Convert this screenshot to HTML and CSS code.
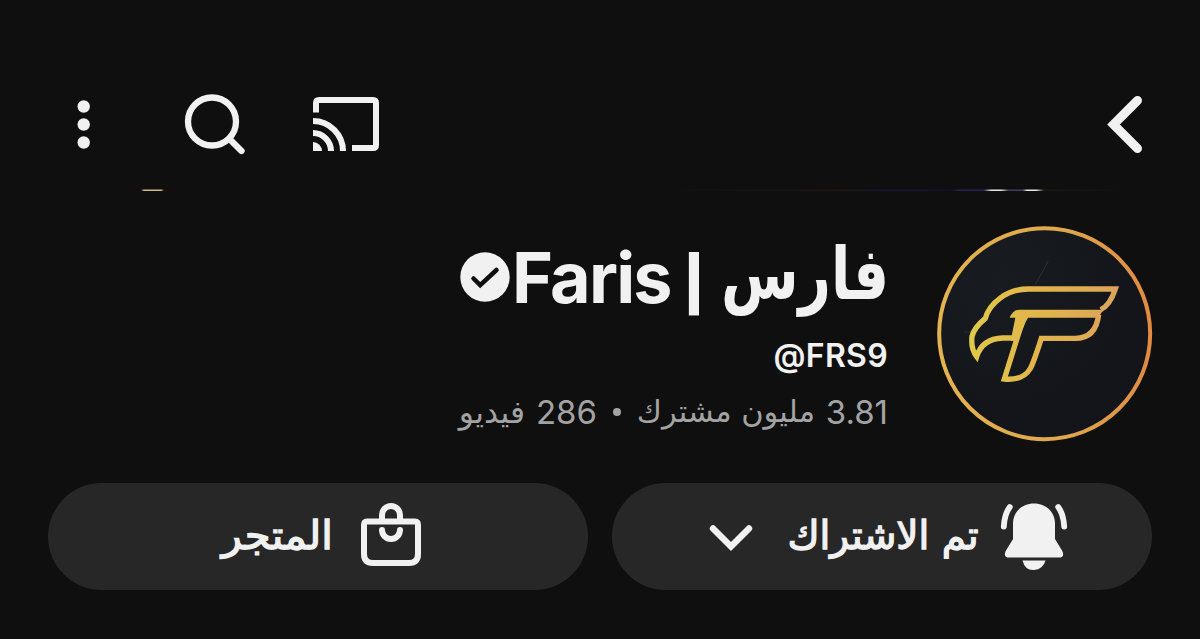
FILE: index.html
```html
<!DOCTYPE html>
<html lang="ar" dir="rtl">
<head>
<meta charset="utf-8">
<title>Faris</title>
<link rel="stylesheet" href="styles.css">
</head>
<body>
<header class="topbar">
  <svg class="back" viewBox="0 0 36 60"><path d="M31.500 6.500 7.500 30.500l24 24" fill="none" stroke="#f1f1f1" stroke-width="9" stroke-linecap="round"/></svg>
  <div class="tools">
    <svg class="cast" viewBox="0 0 66 54"><path d="M3 15.500V6q0-3 3-3h54q3 0 3 3v42q0 3-3 3H39" fill="none" stroke="#f1f1f1" stroke-width="6"/><path d="M0 45a9 9 0 0 1 9 9H0z" fill="#f1f1f1"/><path d="M0 36a18 18 0 0 1 18 18M0 24a30 30 0 0 1 30 30" fill="none" stroke="#f1f1f1" stroke-width="6"/></svg>
    <svg class="search" viewBox="0 0 60 60"><circle cx="27" cy="27.500" r="24" fill="none" stroke="#f1f1f1" stroke-width="6.300"/><path d="M45 45.500l11.500 11.500" stroke="#f1f1f1" stroke-width="6.300" stroke-linecap="round"/></svg>
    <svg class="more" viewBox="0 0 12 48"><g fill="#f1f1f1"><circle cx="5.700" cy="6.500" r="6.200"/><circle cx="5.700" cy="24.500" r="6.200"/><circle cx="5.700" cy="42.500" r="6.200"/></g></svg>
  </div>
</header>
<div class="banner"></div>
<main class="channel">
  <svg class="avatar" viewBox="51 48 648 648">
    <defs>
      <linearGradient id="ring" x1="0" x2="1"><stop offset="0" stop-color="#e3b44f"/><stop offset=".6" stop-color="#dea74b"/><stop offset="1" stop-color="#e18b42"/></linearGradient>
      <linearGradient id="gold" gradientUnits="userSpaceOnUse" x1="150" y1="0" x2="600" y2="0"><stop offset="0" stop-color="#e0c94a"/><stop offset=".45" stop-color="#e2b44b"/><stop offset="1" stop-color="#dca35a"/></linearGradient>
      <radialGradient id="disc" cx=".3" cy=".25" r=".6"><stop offset="0" stop-color="#181c20"/><stop offset="1" stop-color="#13151a"/></radialGradient>
    </defs>
    <circle cx="374" cy="371" r="316.500" fill="url(#disc)" stroke="url(#ring)" stroke-width="12"/>
    <path d="M345 225l40-72M132 366h24" stroke="#2c2f32" stroke-width="3"/>
    <g fill="none" stroke="url(#gold)" stroke-width="16">
      <path d="M283 384H248Q187 386 170 440Q152 417 156 379Q162 353 196 325C208 280 260 237 325 237H586Q570 286 542 299"/>
      <path d="M311 322L253 507Q309 512 330 477Q339 463 364 385H459Q527 389 536 314"/>
    </g>
    <path d="M269 323Q279 299 300 299H550L535 323H324L316 338L294 392H272L286 323Z" fill="url(#gold)"/>
  </svg>
  <div class="info">
    <h1 class="name">
      <span class="name-ar">فارس</span><span class="bar">|</span><span class="name-en" dir="ltr">Faris</span>
      <svg class="verified" viewBox="0 0 50 50"><circle cx="25" cy="25" r="24.700" fill="#f1f1f1"/><path d="M13.500 26.500l6.700 6.700L36.500 18" fill="none" stroke="#0f0f0f" stroke-width="4.500" stroke-linecap="round"/></svg>
    </h1>
    <div class="handle" dir="ltr">@FRS9</div>
    <div class="stats"><span class="num">3.81</span><span class="subs">مليون مشترك</span><span class="dot"></span><span class="num count">286</span><span class="videos">فيديو</span></div>
  </div>
</main>
<nav class="actions">
  <button class="pill subscribed">
    <svg class="bell" viewBox="0 0 66 68"><g fill="#f1f1f1"><path d="M33 0.500C21 0.500 12 9 12 20.500V36L4.700 48Q2 54.500 8 54.500H58Q64 54.500 61.300 48L54 36V20.500C54 9 45 0.500 33 0.500Z"/><path d="M21.500 57.500H44.500Q42 66.500 33 67T21.500 57.500Z"/></g><path d="M8.800 4Q3.500 11 2.800 23.500M57.200 4Q62.500 11 63.200 23.500" fill="none" stroke="#f1f1f1" stroke-width="5.800" stroke-linecap="round"/></svg>
    <span class="sub-label">تم الاشتراك</span>
    <svg class="chevron" viewBox="0 0 42 28"><path d="M3 4.500 21 22.500 39 4.500" fill="none" stroke="#f1f1f1" stroke-width="6.400" stroke-linecap="round"/></svg>
  </button>
  <button class="pill store">
    <svg class="bag" viewBox="0 0 60 64"><g fill="none" stroke="#f1f1f1" stroke-width="6"><path d="M6 18.500H54Q57 18.500 57 22V51Q57 60 48 60H12Q3 60 3 51V22Q3 18.500 6 18.500Z"/><path d="M21 18V12a9 9 0 0 1 18 0v6"/><path d="M21 27a9 9 0 0 0 18 0" stroke-linecap="round"/></g></svg>
    <span class="store-label">المتجر</span>
  </button>
</nav>
</body>
</html>
```
FILE: styles.css
```css
* { box-sizing: border-box; }
body { margin: 0; height: 639px; overflow: hidden; background: #0f0f0f; color: #f1f1f1; font-family: Inter, "DejaVu Sans", sans-serif; }
svg { display: block; flex: none; overflow: visible; }
span { white-space: nowrap; flex: none; }
.topbar { height: 189px; padding: 94px 58px 0 78px; display: flex; justify-content: space-between; align-items: flex-start; }
.back { width: 36px; height: 60px; }
.tools { display: flex; align-items: flex-start; }
.cast { width: 66px; height: 54px; margin-top: 3px; }
.search { width: 60px; height: 60px; margin: 0 68px 0 95px; }
.more { width: 12px; height: 48px; margin-top: 6px; }
.banner { height: 2px; margin: 0 66px; background: linear-gradient(#0f0f0f80 50%, transparent 50%), linear-gradient(to right, #130e0d 0 75px, #d9b985 78px 95px, #130e0d 98px 600px, #20160f 780px, #171238 815px 860px, #101020 885px, #252552 895px 918px, #e8e8e8 925px 935px, #3d4062 942px 957px, #e8e8e8 961px 970px, #20170f 978px, #0f0f0f 1060px); }
.channel { height: 292px; padding: 35px 47px 0; display: flex; }
.avatar { width: 216px; height: 216px; }
.info { flex: 1; padding: 9px 50px 0 0; }
.name { margin: 0; height: 86px; display: flex; align-items: center; font-size: 70px; line-height: 86px; font-weight: 700; }
.name-ar { width: 164px; font: 700 67px/78px "DejaVu Sans", sans-serif; transform: translate(2px, -2px) scale(.84, 1.08); transform-origin: right 60px; }
.bar { width: 18px; margin: 11px 20px 0 13px; font-size: 53px; font-weight: 900; line-height: 70px; text-align: center; display: flex; justify-content: center; }
.name-en { width: 160px; font-size: 70px; letter-spacing: -1.8px; text-align: left; }
.verified { width: 50px; height: 50px; margin: 0 2px 2px 0; }
.handle { height: 40px; margin-top: 14px; font-size: 32px; line-height: 42px; font-weight: 600; letter-spacing: .3px; text-align: right; position: relative; left: 1px; }
.stats { height: 44px; margin-top: 15px; display: flex; align-items: center; color: #a3a3a3; font-size: 33px; line-height: 44px; margin-right: -1px; }
.num { width: 62px; }
.subs { width: 177px; margin-right: 11px; font: 30.500px/44px "DejaVu Sans", sans-serif; }
.dot { width: 8px; height: 8px; margin: 0 17px 0 16px; border-radius: 50%; background: #a3a3a3; }
.count { width: 60px; }
.videos { margin-right: 12px; font: 31.500px/44px "DejaVu Sans", sans-serif; }
.actions { display: grid; grid-template-columns: 540px 540px; gap: 24px; padding: 0 48px; }
.pill { height: 107px; border: 0; border-radius: 54px; padding: 0; background: #272727; color: #f1f1f1; display: flex; align-items: flex-start; font: 400 39px/56px "DejaVu Sans", sans-serif; -webkit-text-stroke: 1.3px #f1f1f1; }
.bell { width: 66px; height: 68px; margin: 20px 85px 0 0; }
.sub-label { width: 192px; margin: 25px 22px 0 1px; }
.chevron { width: 42px; height: 28px; margin: 41px 34px 0 0; }
.bag { width: 60px; height: 64px; margin: 20px 167px 0 0; }
.store-label { margin: 25px 28px 0 0; transform: scaleX(1.07); transform-origin: right; }
```
